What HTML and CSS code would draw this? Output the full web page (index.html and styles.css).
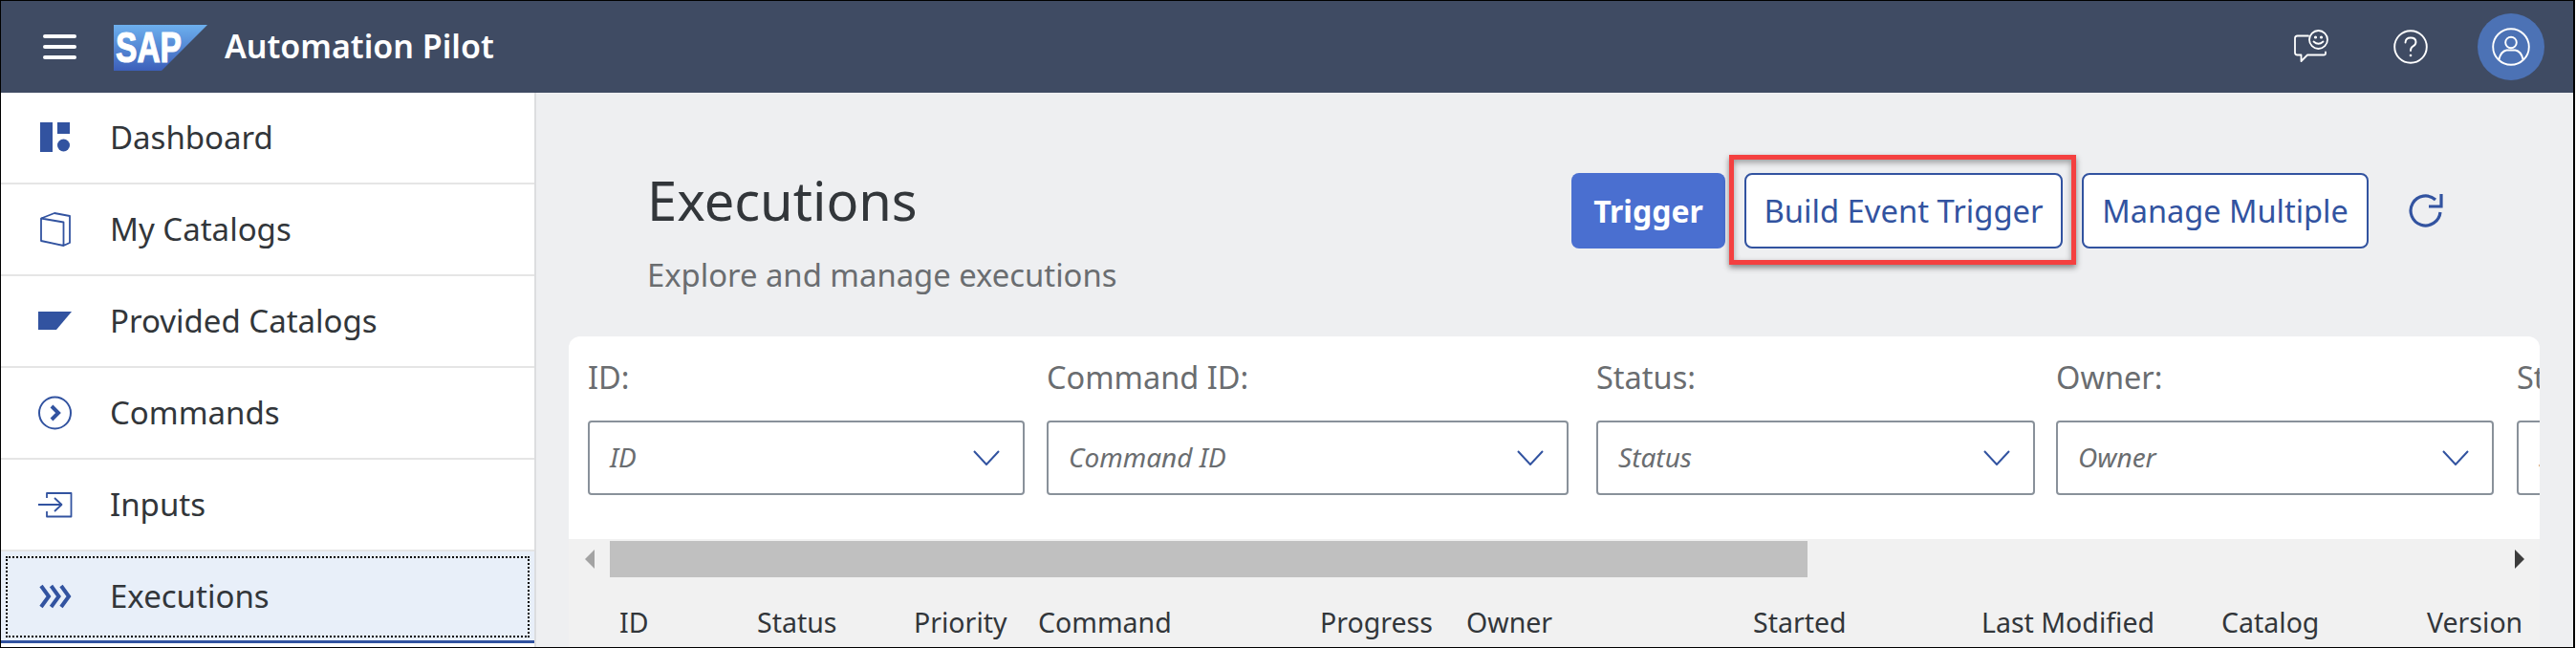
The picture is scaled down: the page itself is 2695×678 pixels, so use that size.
FILE: index.html
```html
<!DOCTYPE html>
<html lang="en">
<head>
    <meta charset="UTF-8">
    <title>Automation Pilot - Executions</title>
    <link rel="stylesheet" href="styles.css">
</head>
<body>
    <div class="app">
        <header class="topbar">
            <button class="menu-btn" aria-label="Menu"><span></span><span></span><span></span></button>
            <svg class="logo" viewBox="0 0 98 48" width="98" height="48">
                <defs>
                    <linearGradient id="logoFill" x1="0" y1="0" x2="0" y2="1">
                        <stop offset="0" stop-color="#6db0ee"/>
                        <stop offset="1" stop-color="#3c5fba"/>
                    </linearGradient>
                </defs>
                <polygon points="0,0 98,0 50,48 0,48" fill="url(#logoFill)"/>
                <text class="logo-text" x="2" y="39" textLength="69" lengthAdjust="spacingAndGlyphs">SAP</text>
            </svg>
            <span class="product">Automation Pilot</span>
            <div class="top-actions">
                <svg class="top-icon feedback" viewBox="0 0 36 36" width="36" height="36" fill="none" stroke="#fff" stroke-width="1.8" stroke-linecap="round" stroke-linejoin="round">
                    <path d="M15 6.5H3.5Q1 6.5 1 9V24Q1 26.5 3.5 26.5H7.5V33L14 26.5H31Q33 26.5 33 25V23.5"/>
                    <circle cx="25.500" cy="10.500" r="9.500"/>
                    <path d="M20.500 12.500Q25.500 17 30.500 12.500"/>
                    <circle cx="22.500" cy="8" r="0.700" fill="#fff"/>
                    <circle cx="28.500" cy="8" r="0.700" fill="#fff"/>
                </svg>
                <svg class="top-icon help" viewBox="0 0 36 36" width="36" height="36" fill="none" stroke="#fff" stroke-width="1.900" stroke-linecap="round">
                    <circle cx="18" cy="18" r="16.800"/>
                    <path d="M12.500 13.500Q12.800 8.500 18 8.500Q23.500 8.500 23.500 13Q23.500 15.800 20.500 17.300Q18 18.600 18 22"/>
                    <circle cx="18" cy="27" r="1.300" fill="#fff" stroke="none"/>
                </svg>
                <div class="avatar">
                    <svg viewBox="0 0 40 40" width="40" height="40" fill="none" stroke="#fff" stroke-width="1.900">
                        <circle cx="20" cy="20" r="18.800"/>
                        <circle cx="20" cy="15.500" r="5.800"/>
                        <path d="M7.500 33Q9.500 24.500 15.500 23.500H24.500Q30.500 24.500 32.500 33"/>
                    </svg>
                </div>
            </div>
        </header>

        <div class="layout">
            <nav class="sidebar">
                <a class="nav-item">
                    <svg class="nav-icon" viewBox="0 0 36 36" width="36" height="36" fill="#3253a0">
                        <rect x="2" y="2" width="13" height="31"/>
                        <rect x="20" y="2" width="13" height="12"/>
                        <circle cx="26.500" cy="26" r="6.500"/>
                    </svg>
                    <span>Dashboard</span>
                </a>
                <a class="nav-item">
                    <svg class="nav-icon" viewBox="0 0 36 36" width="36" height="36" fill="none" stroke="#3253a0" stroke-width="1.800" stroke-linejoin="round">
                        <path d="M3 6.500V30L26.500 35V10.500L3 6.500L17 1L33 4V32L26.500 35"/>
                    </svg>
                    <span>My Catalogs</span>
                </a>
                <a class="nav-item">
                    <svg class="nav-icon" viewBox="0 0 36 36" width="36" height="36" fill="#3253a0">
                        <polygon points="0,8 35,8 19,27 0,27"/>
                    </svg>
                    <span>Provided Catalogs</span>
                </a>
                <a class="nav-item">
                    <svg class="nav-icon" viewBox="0 0 36 36" width="36" height="36" fill="none" stroke="#3253a0">
                        <circle cx="17.500" cy="18" r="16.500" stroke-width="2"/>
                        <path d="M14 11L21 18L14 25" stroke-width="4"/>
                    </svg>
                    <span>Commands</span>
                </a>
                <a class="nav-item">
                    <svg class="nav-icon" viewBox="0 0 36 36" width="36" height="36" fill="none" stroke="#3253a0" stroke-width="1.800" stroke-linejoin="round">
                        <path d="M9 11V6H34.500V30.500H9V25"/>
                        <path d="M0 18H24M17 11L24.500 18L17 25"/>
                    </svg>
                    <span>Inputs</span>
                </a>
                <a class="nav-item nav-item-active">
                    <svg class="nav-icon" viewBox="0 0 36 36" width="36" height="36" fill="none" stroke="#3253a0" stroke-width="4">
                        <path d="M3 7L11 18L3 29"/>
                        <path d="M13.500 7L21.500 18L13.500 29"/>
                        <path d="M24 7L32 18L24 29"/>
                    </svg>
                    <span>Executions</span>
                </a>
            </nav>

            <main class="content">
                <div class="page-head">
                    <div class="page-title">
                        <h1>Executions</h1>
                        <p>Explore and manage executions</p>
                    </div>
                    <div class="page-actions">
                        <button class="btn btn-primary">Trigger</button>
                        <button class="btn btn-outline btn-build">Build Event Trigger<span class="callout"></span></button>
                        <button class="btn btn-outline btn-manage">Manage Multiple</button>
                        <svg class="refresh" viewBox="0 0 36 36" width="36" height="36" fill="none" stroke="#3253a0" stroke-width="3.200">
                            <path d="M28 7A15.500 15.500 0 1 0 33 20"/>
                            <path d="M34 1V14H21"/>
                        </svg>
                    </div>
                </div>

                <section class="panel">
                    <div class="filters">
                        <div class="field field-id">
                            <label>ID:</label>
                            <div class="select"><em>ID</em><svg class="chevron" viewBox="0 0 28 16" width="28" height="16"><path d="M1 1L14 15L27 1"/></svg></div>
                        </div>
                        <div class="field field-command">
                            <label>Command ID:</label>
                            <div class="select"><em>Command ID</em><svg class="chevron" viewBox="0 0 28 16" width="28" height="16"><path d="M1 1L14 15L27 1"/></svg></div>
                        </div>
                        <div class="field field-status">
                            <label>Status:</label>
                            <div class="select"><em>Status</em><svg class="chevron" viewBox="0 0 28 16" width="28" height="16"><path d="M1 1L14 15L27 1"/></svg></div>
                        </div>
                        <div class="field field-owner">
                            <label>Owner:</label>
                            <div class="select"><em>Owner</em><svg class="chevron" viewBox="0 0 28 16" width="28" height="16"><path d="M1 1L14 15L27 1"/></svg></div>
                        </div>
                        <div class="field field-started">
                            <label>Started:</label>
                            <div class="select"><em>Started</em><svg class="chevron" viewBox="0 0 28 16" width="28" height="16"><path d="M1 1L14 15L27 1"/></svg></div>
                        </div>
                    </div>

                    <div class="hscroll">
                        <span class="arrow arrow-left"></span>
                        <div class="track"><div class="thumb"></div></div>
                        <span class="arrow arrow-right"></span>
                    </div>

                    <div class="table-head">
                        <span>ID</span>
                        <span>Status</span>
                        <span>Priority</span>
                        <span>Command</span>
                        <span>Progress</span>
                        <span>Owner</span>
                        <span>Started</span>
                        <span>Last Modified</span>
                        <span>Catalog</span>
                        <span>Version</span>
                    </div>
                </section>
            </main>
        </div>
    </div>
</body>
</html>
```
FILE: styles.css
```css
* {
    box-sizing: border-box;
}

html, body {
    margin: 0;
    padding: 0;
    height: 100%;
    overflow: hidden;
    background: #fff;
}

body {
    font-family: 'Noto Sans', 'Open Sans', sans-serif;
    color: #32363a;
}

.app {
    width: 2694px;
    height: 678px;
    border: 1px solid #000;
    border-right-width: 2px;
    display: flex;
    flex-direction: column;
    overflow: hidden;
}

/* top bar */
.topbar {
    height: 96px;
    flex: none;
    background: #3f4b63;
    display: flex;
    align-items: center;
    color: #fff;
    padding-left: 44px;
}

.menu-btn {
    width: 35px;
    height: 26px;
    padding: 0;
    border: none;
    background: none;
    display: flex;
    flex-direction: column;
    justify-content: space-between;
    margin-right: 39px;
}

.menu-btn span {
    display: block;
    height: 4px;
    background: #fff;
    border-radius: 2px;
}

.logo {
    flex: none;
    margin-top: 2px;
    margin-right: 18px;
}

.logo-text {
    font-family: 'Liberation Sans', sans-serif;
    font-weight: bold;
    font-size: 44px;
    fill: #fff;
    stroke: #fff;
    stroke-width: 1.2;
}

.product {
    font-size: 34px;
    font-weight: 600;
    margin-top: -2px;
}

.top-actions {
    margin-left: auto;
    display: flex;
    align-items: center;
    padding-right: 30px;
}

.feedback {
    margin-right: 68px;
}

.help {
    margin-right: 52px;
}

.avatar {
    width: 70px;
    height: 70px;
    border-radius: 50%;
    background: #4c72b5;
    display: flex;
    align-items: center;
    justify-content: center;
}

/* layout */
.layout {
    flex: 1;
    display: flex;
    min-height: 0;
}

.sidebar {
    width: 560px;
    flex: none;
    background: #fff;
    border-right: 2px solid #dcdddf;
}

.nav-item {
    height: 96px;
    display: flex;
    align-items: center;
    padding-left: 39px;
    font-size: 33px;
    line-height: 44px;
    border-bottom: 2px solid #e5e5e5;
    color: #32363a;
}

.nav-item span {
    margin-top: 0;
}

.nav-icon {
    flex: none;
    margin-right: 39px;
}

.nav-item-active {
    position: relative;
    background: #e8eff9;
    border-bottom: 3px solid #3253a0;
}

.nav-item-active::after {
    content: "";
    position: absolute;
    top: 5px;
    left: 5px;
    right: 5px;
    bottom: 3px;
    border: 2px dotted #000;
}

/* main area */
.content {
    flex: 1;
    min-width: 0;
    background: #eeeff1;
    padding: 0 35px 0 34px;
}

.page-head {
    height: 255px;
    display: flex;
    justify-content: space-between;
    padding: 84px 101px 0 82px;
}

.page-title {
    margin-top: -11px;
}

.page-title h1 {
    margin: 0;
    font-size: 56px;
    font-weight: 400;
    line-height: 78px;
    color: #32363a;
}

.page-title p {
    margin: 18px 0 0;
    font-size: 32.8px;
    line-height: 44px;
    color: #6a6d70;
}

.page-actions {
    display: flex;
    align-items: flex-start;
}

.btn {
    height: 79px;
    font-family: inherit;
    font-size: 32.8px;
    border-radius: 8px;
    padding: 0;
}

.btn-primary {
    width: 161px;
    background: #4a6fd0;
    border: none;
    color: #fff;
    font-size: 32px;
    font-weight: 700;
}

.btn-outline {
    background: #fff;
    border: 2px solid #3253a0;
    color: #3253a0;
}

.btn-build {
    position: relative;
    width: 333px;
    margin-left: 20px;
}

.btn-manage {
    width: 300px;
    margin-left: 20px;
    font-size: 32.5px;
}

.callout {
    position: absolute;
    top: -21px;
    left: -18px;
    right: -16px;
    bottom: -19px;
    border: 5px solid #f44040;
    box-shadow: 0 3px 6px rgba(0, 0, 0, 0.45), inset 0 3px 6px rgba(0, 0, 0, 0.35);
}

.refresh {
    margin: 21px 0 0 42px;
}

/* filters panel */
.panel {
    height: 325px;
    background: #f1f1f1;
    border-radius: 12px 12px 0 0;
    overflow: hidden;
}

.filters {
    height: 212px;
    background: #fff;
    display: flex;
    padding: 21px 0 0 20px;
    overflow: hidden;
}

.field {
    flex: none;
}

.field label {
    display: block;
    font-size: 32.5px;
    line-height: 44px;
    color: #6a6d70;
}

.field-id {
    width: 457px;
    margin-right: 23px;
}

.field-command {
    width: 546px;
    margin-right: 29px;
}

.field-status {
    width: 459px;
    margin-right: 22px;
}

.field-owner {
    width: 458px;
    margin-right: 24px;
}

.field-started {
    width: 458px;
}

.select {
    height: 78px;
    margin-top: 23px;
    border: 2px solid #89919a;
    border-radius: 4px;
    display: flex;
    align-items: center;
    justify-content: space-between;
    padding: 0 24px 0 21px;
    font-size: 28px;
    color: #6a6d70;
}

.select em {
    margin-top: -3px;
}

.chevron {
    fill: none;
    stroke: #3253a0;
    stroke-width: 2;
}

.hscroll {
    height: 46px;
    display: flex;
    padding-top: 2px;
    align-items: flex-start;
}

.track {
    flex: 1;
    height: 38px;
}

.thumb {
    width: 1253px;
    height: 38px;
    background: #c0c0c0;
}

.arrow {
    flex: none;
    width: 0;
    height: 0;
    margin-top: 9px;
    border-top: 10px solid transparent;
    border-bottom: 10px solid transparent;
}

.arrow-left {
    margin-left: 17px;
    margin-right: 16px;
    border-right: 10px solid #a3a3a3;
}

.arrow-right {
    margin-right: 16px;
    border-left: 10px solid #3c3c3c;
}

.table-head {
    display: grid;
    grid-template-columns: 144px 164px 130px 295px 153px 300px 239px 251px 215px 1fr;
    padding: 22px 0 0 53px;
    font-size: 28.5px;
    line-height: 38px;
    color: #32363a;
    white-space: nowrap;
}
```
